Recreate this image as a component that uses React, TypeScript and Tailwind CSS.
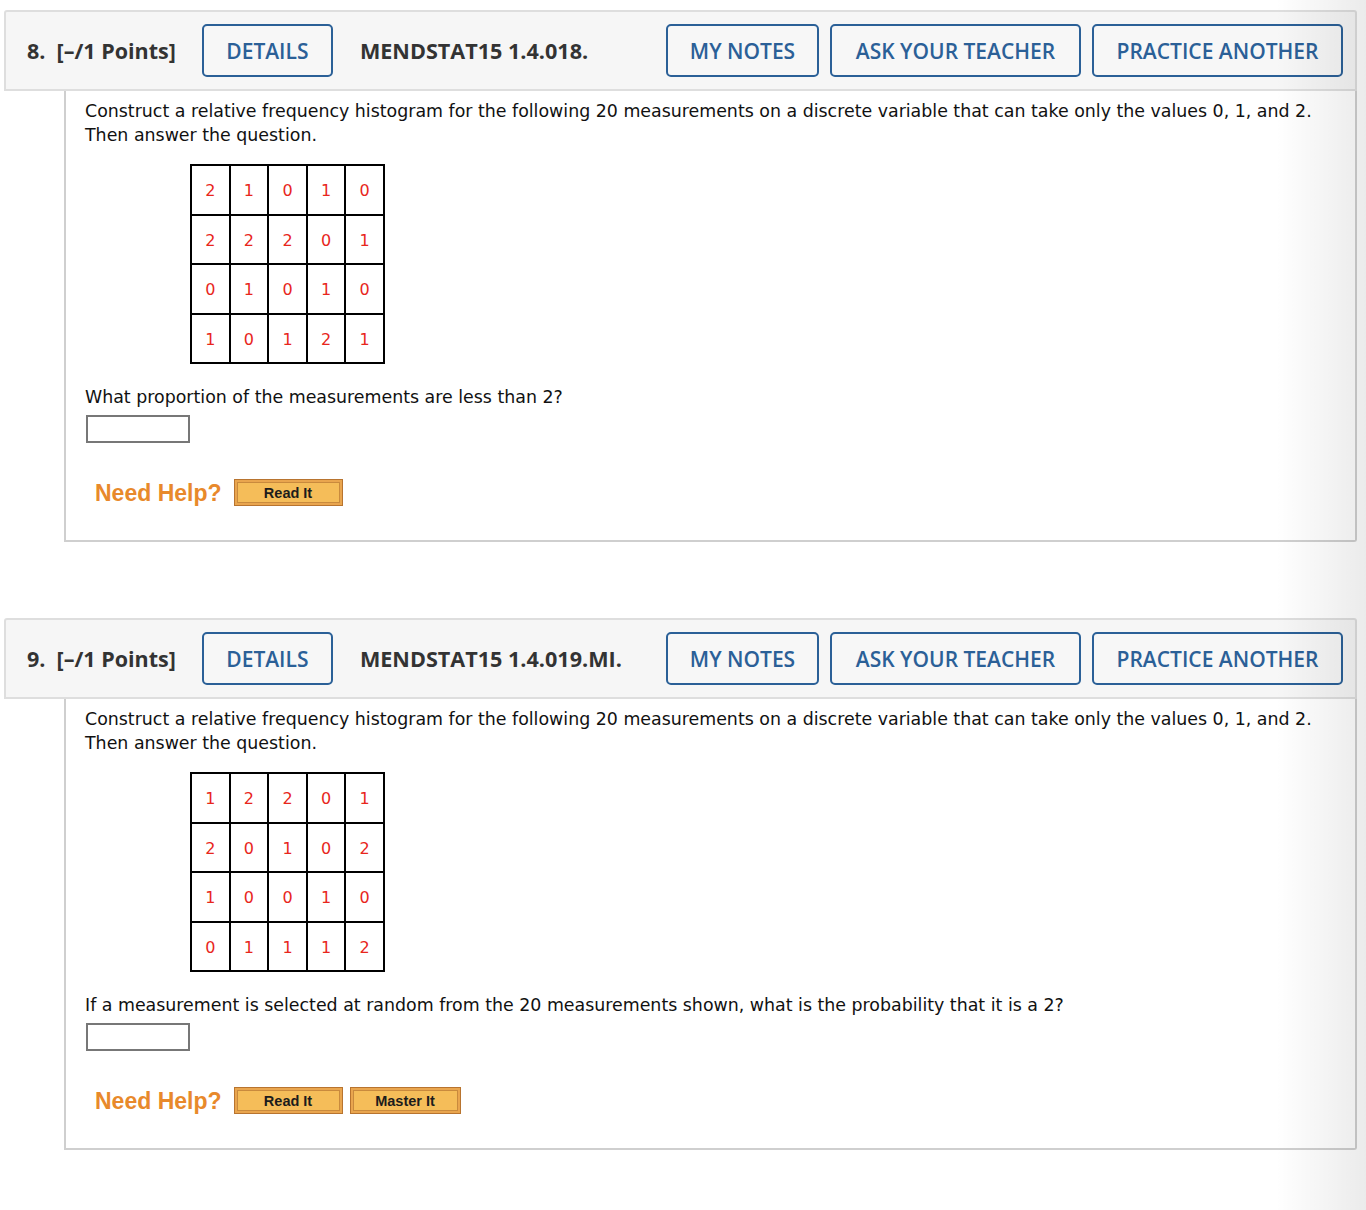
import React from "react";

const bodyFont = { fontFamily: '"DejaVu Sans", Verdana, sans-serif' };

function Grid({ data }: { data: number[][] }) {
  return (
    <div className="ml-[105px] mt-[17px] w-fit border-l-2 border-t-2 border-black">
      {data.map((row, i) => (
        <div key={i} className="flex">
          {row.map((v, j) => (
            <div
              key={j}
              className="box-border flex h-[49.5px] w-[38.6px] items-center justify-center border-b-2 border-r-2 border-black pt-[3px] text-[16px] text-[#e8261c]"
            >
              {v}
            </div>
          ))}
        </div>
      ))}
    </div>
  );
}

function OutlineBtn({ label, w }: { label: string; w: string }) {
  return (
    <div
      className={`flex h-[53px] ${w} items-center justify-center rounded-[5px] border-2 border-[#2b6097] bg-[#f7f7f7] pt-[2px] text-[21px] font-semibold text-[#2b6097]`}
    >
      {label}
    </div>
  );
}

function HelpBtn({ label, w }: { label: string; w: string }) {
  return (
    <div className={`box-border h-[27px] ${w} border border-[#b8742f] bg-[#e9a54e] p-[2px]`}>
      <div
        className="flex h-full w-full items-center justify-center border border-[#c98a3d] bg-[#f5bd59] text-[14.5px] font-bold text-[#1c1c1c]"
        style={{ fontFamily: '"Liberation Sans", Arial, sans-serif' }}
      >
        {label}
      </div>
    </div>
  );
}

function Question({
  num,
  code,
  data,
  question,
  master,
}: {
  num: string;
  code: string;
  data: number[][];
  question: string;
  master?: boolean;
}) {
  return (
    <div>
      <div
        className="ml-[4px] flex h-[81px] w-[1353px] items-center rounded-t-[3px] border-2 border-[#dedede] bg-[#f6f6f6] pl-[21px] pr-[12px]"
        style={{ fontFamily: '"Open Sans", sans-serif' }}
      >
        <div className="whitespace-pre pt-[2px] text-[21.5px] font-bold text-[#333]">
          {num}.{"  "}[–/1 Points]
        </div>
        <div className="ml-[26px]">
          <OutlineBtn label="DETAILS" w="w-[131px]" />
        </div>
        <div className="ml-[27px] pt-[2px] text-[21.6px] font-bold text-[#333]">{code}</div>
        <div className="ml-auto flex gap-[11px]">
          <OutlineBtn label="MY NOTES" w="w-[153px]" />
          <OutlineBtn label="ASK YOUR TEACHER" w="w-[251px]" />
          <OutlineBtn label="PRACTICE ANOTHER" w="w-[251px]" />
        </div>
      </div>
      <div
        className="ml-[64px] h-[451px] w-[1293px] rounded-br-[3px] border-b-2 border-l-2 border-r-2 border-[#cfcfcf] bg-white pl-[19px] pt-[8px] text-[17.4px] leading-[24px] text-[#111]"
        style={bodyFont}
      >
        <div>
          Construct a relative frequency histogram for the following 20 measurements on a discrete variable that can
          take only the values 0, 1, and 2.
          <br />
          Then answer the question.
        </div>
        <Grid data={data} />
        <div className="mt-[21px]">{question}</div>
        <div className="ml-[1px] mt-[6px] h-[28px] w-[104px] border-2 border-[#777] bg-white" />
        <div className="mt-[36px] flex items-center">
          <div
            className="ml-[10px] text-[23px] font-bold text-[#e8892b]"
            style={{ fontFamily: '"Liberation Sans", Arial, sans-serif' }}
          >
            Need Help?
          </div>
          <div className="ml-[12px] flex gap-[7px]">
            <HelpBtn label="Read It" w="w-[109px]" />
            {master && <HelpBtn label="Master It" w="w-[111px]" />}
          </div>
        </div>
      </div>
    </div>
  );
}

export default function App() {
  return (
    <div className="relative h-[1210px] w-[1366px] overflow-hidden bg-white pt-[10px]">
      <Question
        num="8"
        code="MENDSTAT15 1.4.018."
        data={[
          [2, 1, 0, 1, 0],
          [2, 2, 2, 0, 1],
          [0, 1, 0, 1, 0],
          [1, 0, 1, 2, 1],
        ]}
        question="What proportion of the measurements are less than 2?"
      />
      <div className="h-[76px]" />
      <Question
        num="9"
        code="MENDSTAT15 1.4.019.MI."
        data={[
          [1, 2, 2, 0, 1],
          [2, 0, 1, 0, 2],
          [1, 0, 0, 1, 0],
          [0, 1, 1, 1, 2],
        ]}
        question="If a measurement is selected at random from the 20 measurements shown, what is the probability that it is a 2?"
        master
      />
      <div className="pointer-events-none absolute right-0 top-0 h-full w-[90px] bg-gradient-to-r from-transparent to-[#00000014]" />
    </div>
  );
}
